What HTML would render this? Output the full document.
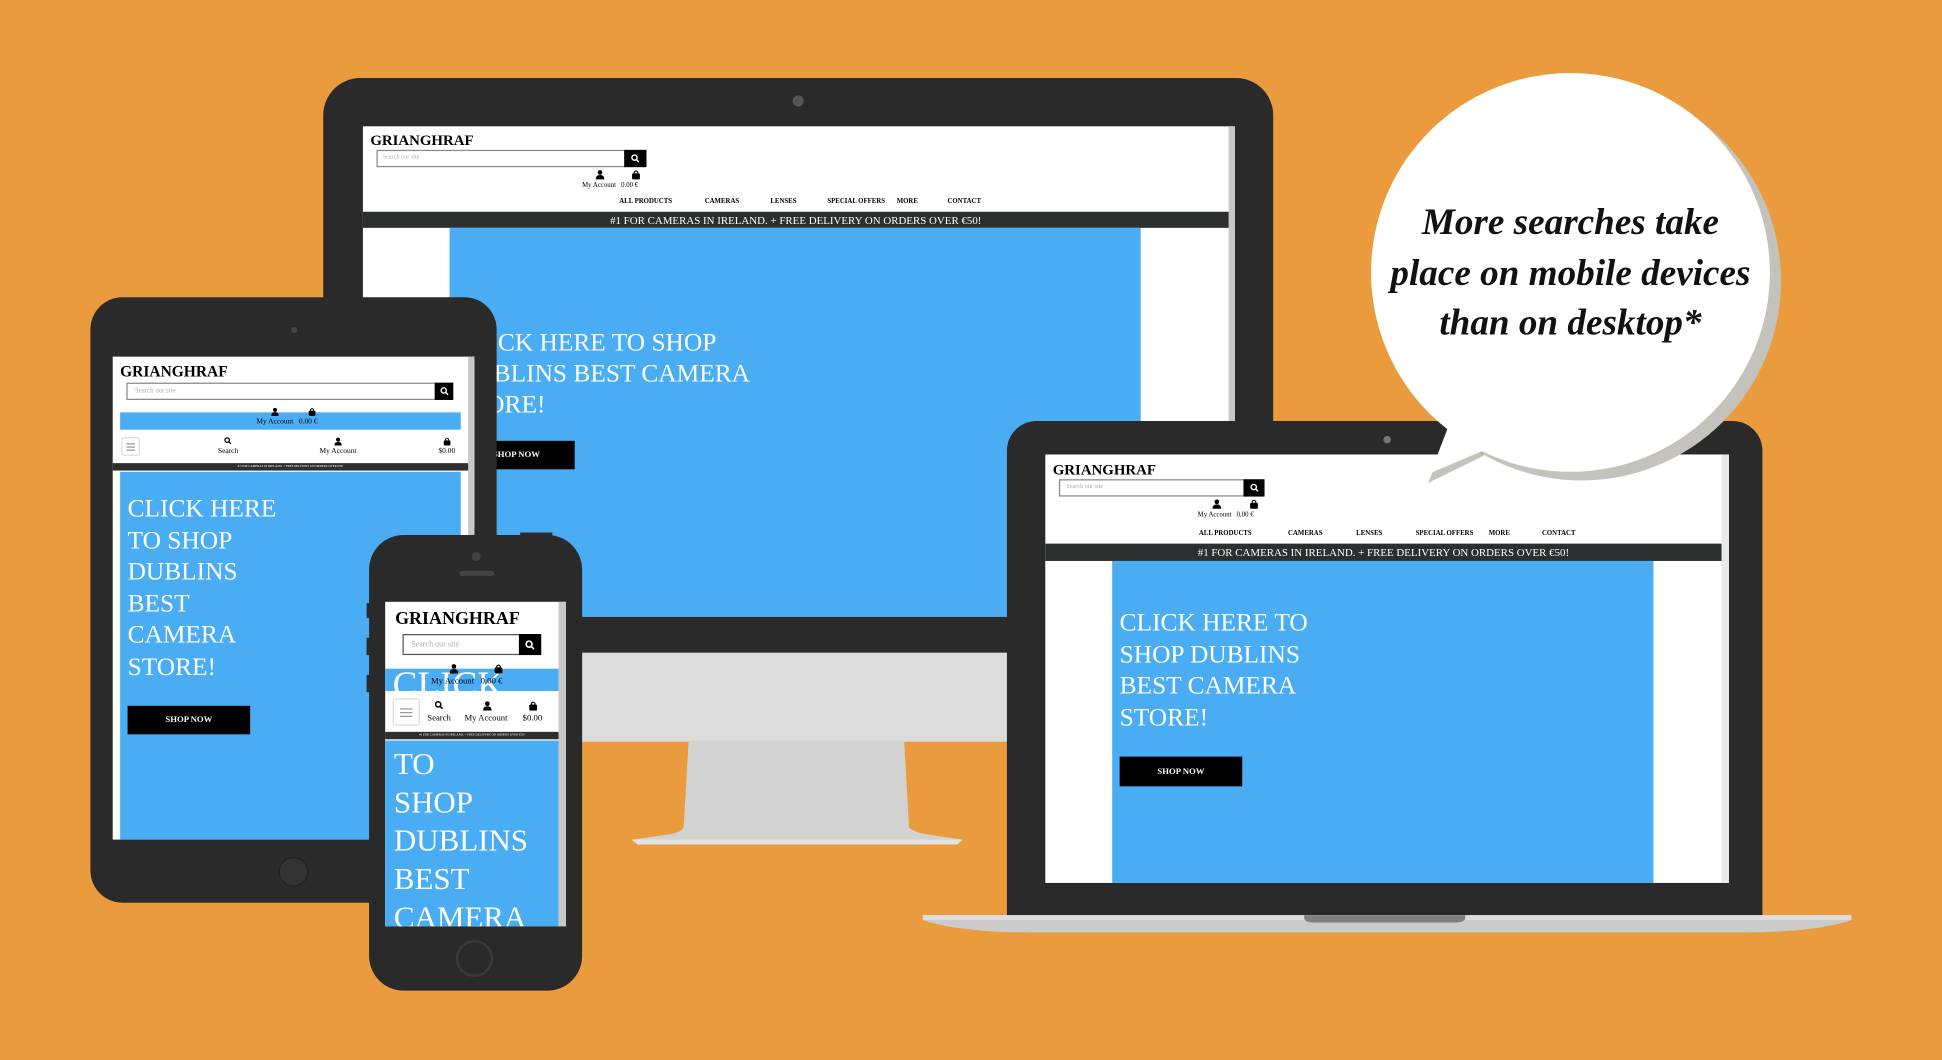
<!DOCTYPE html>
<html><head><meta charset="utf-8"><style>
html,body{margin:0;padding:0;width:1942px;height:1060px;overflow:hidden;background:#E99B3E}
#w{position:absolute;left:0;top:0;width:1568px;height:856px;transform:scale(1.23852,1.23832);transform-origin:0 0;font-family:"Liberation Serif",serif}
.a{position:absolute}
.blk{background:#2a2a2a}
.wh{background:#fff}
.bl{background:#4AACF3}
.t{position:absolute;white-space:nowrap;color:#000}
.sb{position:absolute;border:1px solid #888;background:#fff;color:#aab;box-sizing:border-box}
.btn{position:absolute;background:#000}
.btn svg{position:absolute;left:50%;top:50%;transform:translate(-50%,-50%)}
.ban{position:absolute;background:#2d2f2f;color:#fff;text-align:center;white-space:nowrap}
.hero{position:absolute;color:#fff;white-space:nowrap}
.shop{position:absolute;background:#000;color:#fff;text-align:center;font-weight:bold}
.ico{position:absolute}
</style></head><body><div id="w">

<!-- MONITOR -->
<div class="a" style="left:470px;top:527px;width:345px;height:72px;background:#dcdcdc"></div>
<svg class="a" style="left:505px;top:598px" width="280" height="86"><path d="M51 0 L225 0 L229 70 Q232 74 245 76 L272 80 Q272 83 260 83 L20 83 Q4 83 6 80 L34 76 Q46 74 47 70 Z" fill="#d2d2d2"/><path d="M5 80 L272 80 L268 84 L10 84Z" fill="#e4e4e4"/></svg>
<div class="a blk" style="left:261px;top:63px;width:767px;height:464px;border-radius:30px 30px 0 0"></div>
<div class="a" style="left:640px;top:77px;width:9px;height:9px;border-radius:50%;background:#555"></div>
<div class="a wh" style="left:293px;top:102px;width:704px;height:396px"></div>
<div class="a" style="left:992px;top:102px;width:5px;height:396px;background:#c8c8c8"></div>
<div class="t" style="left:299px;top:106px;font-size:12px;font-weight:bold">GRIANGHRAF</div>
<div class="sb" style="left:304px;top:121px;width:201px;height:14px;font-size:5px;padding:3px 4px">Search our site</div>
<div class="btn" style="left:504px;top:121px;width:18px;height:14px"><svg width="7" height="7" viewBox="0 0 10 10"><circle cx="4" cy="4" r="3" stroke="#fff" stroke-width="1.6" fill="none"/><path d="M6 6L9 9" stroke="#fff" stroke-width="1.6"/></svg></div>
<svg class="ico" style="left:481px;top:137px" width="7" height="8" viewBox="0 0 10 11"><circle cx="5" cy="3" r="2.7"/><path d="M0 11Q0 6 5 6Q10 6 10 11Z"/></svg>
<svg class="ico" style="left:510px;top:137px" width="7" height="8" viewBox="0 0 10 11"><path d="M3 4V2.5Q5 0 7 2.5V4" stroke="#000" fill="none" stroke-width="1.3"/><rect x="0.5" y="4" width="9" height="7" rx="1.5"/></svg>
<div class="t" style="left:470px;top:147px;font-size:5.5px">My Account &nbsp; 0.00 €</div>
<div class="t" style="left:500px;top:160px;font-size:5.5px;font-weight:bold">ALL PRODUCTS</div>
<div class="t" style="left:569px;top:160px;font-size:5.5px;font-weight:bold">CAMERAS</div>
<div class="t" style="left:622px;top:160px;font-size:5.5px;font-weight:bold">LENSES</div>
<div class="t" style="left:668px;top:160px;font-size:5.5px;font-weight:bold">SPECIAL OFFERS</div>
<div class="t" style="left:724px;top:160px;font-size:5.5px;font-weight:bold">MORE</div>
<div class="t" style="left:765px;top:160px;font-size:5.5px;font-weight:bold">CONTACT</div>
<div class="ban" style="left:293px;top:171px;width:699px;height:13px;font-size:8.8px;line-height:14px">#1 FOR CAMERAS IN IRELAND. + FREE DELIVERY ON ORDERS OVER €50!</div>
<div class="a bl" style="left:363px;top:184px;width:558px;height:314px"></div>
<div class="hero" style="left:369px;top:265px;font-size:20.5px;line-height:25px">CLICK HERE TO SHOP<br>DUBLINS BEST CAMERA<br>STORE!</div>
<div class="shop" style="left:370px;top:356px;width:94px;height:23px;font-size:7px;line-height:23px">SHOP NOW</div>

<!-- TABLET -->
<div class="a blk" style="left:73px;top:240px;width:328px;height:489px;border-radius:26px"></div>
<div class="a" style="left:235px;top:264px;width:5px;height:5px;border-radius:50%;background:#444"></div>
<div class="a" style="left:225px;top:692px;width:22px;height:22px;border-radius:50%;background:#333;border:1px solid #222"></div>
<div class="a wh" style="left:91px;top:288px;width:292px;height:390px"></div>
<div class="a" style="left:378px;top:288px;width:5px;height:390px;background:#c8c8c8"></div>
<div class="t" style="left:97px;top:293px;font-size:12.5px;font-weight:bold">GRIANGHRAF</div>
<div class="sb" style="left:102px;top:309px;width:250px;height:14px;font-size:5.5px;padding:3px 6px">Search our site</div>
<div class="btn" style="left:351px;top:309px;width:15px;height:14px"><svg width="7" height="7" viewBox="0 0 10 10"><circle cx="4" cy="4" r="3" stroke="#fff" stroke-width="1.6" fill="none"/><path d="M6 6L9 9" stroke="#fff" stroke-width="1.6"/></svg></div>
<div class="a bl" style="left:97px;top:333px;width:275px;height:14px"></div>
<svg class="ico" style="left:219px;top:329px" width="6" height="7" viewBox="0 0 10 11"><circle cx="5" cy="3" r="2.7"/><path d="M0 11Q0 6 5 6Q10 6 10 11Z"/></svg>
<svg class="ico" style="left:249px;top:329px" width="6" height="7" viewBox="0 0 10 11"><path d="M3 4V2.5Q5 0 7 2.5V4" stroke="#000" fill="none" stroke-width="1.3"/><rect x="0.5" y="4" width="9" height="7" rx="1.5"/></svg>
<div class="t" style="left:207px;top:338px;font-size:6px">My Account &nbsp; 0.00 €</div>
<div class="a" style="left:98px;top:353px;width:15px;height:15px;border:1px solid #ddd;border-radius:2px;box-sizing:border-box"><div style="margin:4px 3px;height:1px;background:#999;box-shadow:0 2.5px 0 #999,0 5px 0 #999"></div></div>
<svg class="ico" style="left:181px;top:353px" width="6" height="6" viewBox="0 0 10 10"><circle cx="4" cy="4" r="3" stroke="#000" stroke-width="1.8" fill="none"/><path d="M6 6L9 9" stroke="#000" stroke-width="1.8"/></svg>
<svg class="ico" style="left:270px;top:353px" width="6" height="7" viewBox="0 0 10 11"><circle cx="5" cy="3" r="2.7"/><path d="M0 11Q0 6 5 6Q10 6 10 11Z"/></svg>
<svg class="ico" style="left:358px;top:353px" width="6" height="7" viewBox="0 0 10 11"><path d="M3 4V2.5Q5 0 7 2.5V4" stroke="#000" fill="none" stroke-width="1.3"/><rect x="0.5" y="4" width="9" height="7" rx="1.5"/></svg>
<div class="t" style="left:176px;top:362px;font-size:6px">Search</div>
<div class="t" style="left:258px;top:362px;font-size:6px">My Account</div>
<div class="t" style="left:354px;top:362px;font-size:6px">$0.00</div>
<div class="ban" style="left:91px;top:374px;width:287px;height:6px;font-size:2.5px;line-height:6px">#1 FOR CAMERAS IN IRELAND. + FREE DELIVERY ON ORDERS OVER €50!</div>
<div class="a bl" style="left:97px;top:381px;width:275px;height:297px"></div>
<div class="hero" style="left:103px;top:399px;font-size:20.5px;line-height:25.6px">CLICK HERE<br>TO SHOP<br>DUBLINS<br>BEST<br>CAMERA<br>STORE!</div>
<div class="shop" style="left:103px;top:570px;width:99px;height:23px;font-size:7px;line-height:23px">SHOP NOW</div>

<!-- PHONE -->
<div class="a" style="left:296px;top:487px;width:4px;height:12px;background:#2a2a2a"></div>
<div class="a" style="left:296px;top:515px;width:4px;height:14px;background:#2a2a2a"></div>
<div class="a" style="left:296px;top:545px;width:4px;height:14px;background:#2a2a2a"></div>
<div class="a" style="left:420px;top:430px;width:26px;height:4px;background:#2a2a2a"></div>
<div class="a blk" style="left:298px;top:432px;width:172px;height:368px;border-radius:28px"></div>
<div class="a" style="left:381px;top:446px;width:7px;height:7px;border-radius:50%;background:#444"></div>
<div class="a" style="left:371px;top:461px;width:28px;height:4px;border-radius:2px;background:#444"></div>
<div class="a" style="left:368px;top:759px;width:30px;height:30px;border-radius:50%;border:2px solid #3a3a3a;box-sizing:border-box"></div>
<div class="a wh" style="left:311px;top:486px;width:146px;height:262px;overflow:hidden">
  <div class="a bl" style="left:0;top:54px;width:140px;height:18px;overflow:hidden"><div class="hero" style="left:6px;top:-1px;font-size:30px;line-height:30px">CLICK</div></div>
</div>
<div class="a" style="left:451px;top:486px;width:6px;height:262px;background:#c8c8c8"></div>
<div class="t" style="left:319px;top:492px;font-size:14.5px;font-weight:bold">GRIANGHRAF</div>
<div class="sb" style="left:325px;top:512px;width:95px;height:17px;font-size:6.5px;padding:4px 6px;border-color:#555">Search our site</div>
<div class="btn" style="left:419px;top:512px;width:18px;height:17px"><svg width="8" height="8" viewBox="0 0 10 10"><circle cx="4" cy="4" r="3" stroke="#fff" stroke-width="1.6" fill="none"/><path d="M6 6L9 9" stroke="#fff" stroke-width="1.6"/></svg></div>
<svg class="ico" style="left:363px;top:536px" width="7" height="8" viewBox="0 0 10 11"><circle cx="5" cy="3" r="2.7"/><path d="M0 11Q0 6 5 6Q10 6 10 11Z"/></svg>
<svg class="ico" style="left:399px;top:536px" width="7" height="8" viewBox="0 0 10 11"><path d="M3 4V2.5Q5 0 7 2.5V4" stroke="#000" fill="none" stroke-width="1.3"/><rect x="0.5" y="4" width="9" height="7" rx="1.5"/></svg>
<div class="t" style="left:348px;top:546px;font-size:7px">My Account &nbsp; 0.00 €</div>
<div class="a" style="left:317px;top:564px;width:22px;height:22px;border:1px solid #ddd;border-radius:2px;box-sizing:border-box;background:#fff"><div style="margin:7px 5px;height:1px;background:#999;box-shadow:0 3px 0 #999,0 6px 0 #999"></div></div>
<svg class="ico" style="left:351px;top:566px" width="7" height="7" viewBox="0 0 10 10"><circle cx="4" cy="4" r="3" stroke="#000" stroke-width="1.8" fill="none"/><path d="M6 6L9 9" stroke="#000" stroke-width="1.8"/></svg>
<svg class="ico" style="left:390px;top:566px" width="7" height="8" viewBox="0 0 10 11"><circle cx="5" cy="3" r="2.7"/><path d="M0 11Q0 6 5 6Q10 6 10 11Z"/></svg>
<svg class="ico" style="left:427px;top:566px" width="7" height="8" viewBox="0 0 10 11"><path d="M3 4V2.5Q5 0 7 2.5V4" stroke="#000" fill="none" stroke-width="1.3"/><rect x="0.5" y="4" width="9" height="7" rx="1.5"/></svg>
<div class="t" style="left:345px;top:576px;font-size:7px">Search</div>
<div class="t" style="left:375px;top:576px;font-size:7px">My Account</div>
<div class="t" style="left:422px;top:576px;font-size:7px">$0.00</div>
<div class="ban" style="left:311px;top:591px;width:140px;height:6px;font-size:2.5px;line-height:6px">#1 FOR CAMERAS IN IRELAND. + FREE DELIVERY ON ORDERS OVER €50!</div>
<div class="a bl" style="left:311px;top:598px;width:140px;height:150px;overflow:hidden"><div class="hero" style="left:7px;top:4px;font-size:25px;line-height:31px">TO<br>SHOP<br>DUBLINS<br>BEST<br>CAMERA</div></div>

<!-- LAPTOP -->
<div class="a blk" style="left:813px;top:340px;width:610px;height:402px;border-radius:24px 24px 0 0"></div>
<div class="a" style="left:1117px;top:352px;width:6px;height:6px;border-radius:50%;background:#777"></div>
<div class="a wh" style="left:844px;top:367px;width:552px;height:346px"></div>
<div class="a" style="left:1390px;top:367px;width:6px;height:346px;background:#e8e8e8"></div>
<div class="t" style="left:850px;top:372px;font-size:12px;font-weight:bold">GRIANGHRAF</div>
<div class="sb" style="left:855px;top:387px;width:150px;height:14px;font-size:5px;padding:3px 5px">Search our site</div>
<div class="btn" style="left:1004px;top:387px;width:17px;height:14px"><svg width="7" height="7" viewBox="0 0 10 10"><circle cx="4" cy="4" r="3" stroke="#fff" stroke-width="1.6" fill="none"/><path d="M6 6L9 9" stroke="#fff" stroke-width="1.6"/></svg></div>
<svg class="ico" style="left:979px;top:403px" width="7" height="8" viewBox="0 0 10 11"><circle cx="5" cy="3" r="2.7"/><path d="M0 11Q0 6 5 6Q10 6 10 11Z"/></svg>
<svg class="ico" style="left:1009px;top:403px" width="7" height="8" viewBox="0 0 10 11"><path d="M3 4V2.5Q5 0 7 2.5V4" stroke="#000" fill="none" stroke-width="1.3"/><rect x="0.5" y="4" width="9" height="7" rx="1.5"/></svg>
<div class="t" style="left:967px;top:413px;font-size:5.5px">My Account &nbsp; 0.00 €</div>
<div class="t" style="left:968px;top:428px;font-size:5.5px;font-weight:bold">ALL PRODUCTS</div>
<div class="t" style="left:1040px;top:428px;font-size:5.5px;font-weight:bold">CAMERAS</div>
<div class="t" style="left:1095px;top:428px;font-size:5.5px;font-weight:bold">LENSES</div>
<div class="t" style="left:1143px;top:428px;font-size:5.5px;font-weight:bold">SPECIAL OFFERS</div>
<div class="t" style="left:1202px;top:428px;font-size:5.5px;font-weight:bold">MORE</div>
<div class="t" style="left:1245px;top:428px;font-size:5.5px;font-weight:bold">CONTACT</div>
<div class="ban" style="left:844px;top:439px;width:546px;height:14px;font-size:8.8px;line-height:14px">#1 FOR CAMERAS IN IRELAND. + FREE DELIVERY ON ORDERS OVER €50!</div>
<div class="a bl" style="left:898px;top:453px;width:437px;height:260px"></div>
<div class="hero" style="left:904px;top:491px;font-size:20.5px;line-height:25.6px">CLICK HERE TO<br>SHOP DUBLINS<br>BEST CAMERA<br>STORE!</div>
<div class="shop" style="left:904px;top:611px;width:99px;height:24px;font-size:7px;line-height:24px">SHOP NOW</div>
<svg class="a" style="left:745px;top:737px" width="750" height="18"><path d="M0 2 L750 2 L750 6 Q720 16 660 16 L90 16 Q30 16 0 6Z" fill="#cbcbcb"/><rect x="0" y="2" width="750" height="4" fill="#dedede"/><path d="M308 2 L438 2 L438 4 Q438 8 430 8 L316 8 Q308 8 308 4Z" fill="#808080"/></svg>

<!-- BUBBLE -->
<svg class="a" style="left:1100px;top:50px" width="345" height="345">
<circle cx="177" cy="177" r="161" fill="#c3c2bd"/>
<path d="M72 295 L53 340 L98 318 Z" fill="#c3c2bd"/>
<circle cx="168" cy="170" r="161" fill="#fff"/>
<path d="M75 280 L55 332 L95 315 L120 300Z" fill="#fff"/>
</svg>
<div class="t" style="left:1100px;top:160px;width:336px;text-align:center;font-size:30px;line-height:40.5px;font-weight:bold;font-style:italic;color:#111">More searches take<br>place on mobile devices<br>than on desktop*</div>

</div></body></html>
